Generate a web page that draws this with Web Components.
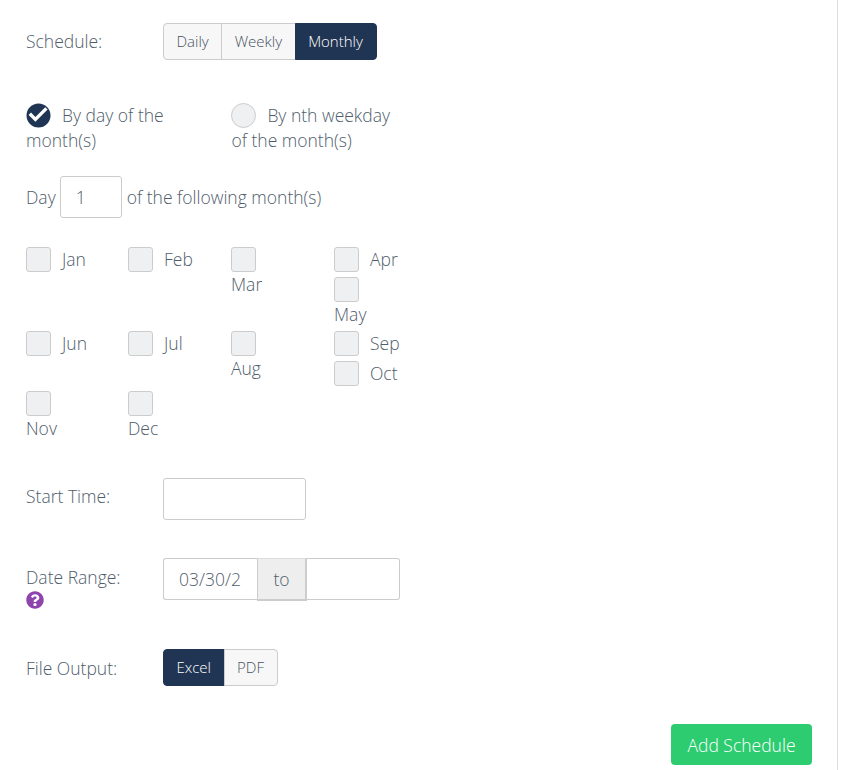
<!DOCTYPE html>
<html lang="en">
<head>
<meta charset="UTF-8">
<title>Schedule</title>
<style>
  html, body { margin: 0; height: 100%; background: #fff; overflow: hidden; }
  body { font: 300 17.5px/25px "Open Sans", "Liberation Sans", sans-serif; color: #4f5d6b; }
</style>
</head>
<body>
<schedule-panel>
  <form-row label="Schedule:" style="height:37px">
    <btn-group items="Daily,Weekly,Monthly" active="Monthly"></btn-group>
  </form-row>

  <radio-pair style="margin-top:43px">
    <radio-opt checked>By day of the month(s)</radio-opt>
    <radio-opt>By nth weekday of the month(s)</radio-opt>
  </radio-pair>

  <day-line style="margin-top:23px"></day-line>

  <month-grid style="margin-top:29px">
    <div><month-check>Jan</month-check></div>
    <div><month-check>Feb</month-check></div>
    <div><month-check stacked>Mar</month-check></div>
    <div><month-check>Apr</month-check><month-check stacked>May</month-check></div>
    <div><month-check>Jun</month-check></div>
    <div><month-check>Jul</month-check></div>
    <div><month-check stacked>Aug</month-check></div>
    <div><month-check>Sep</month-check><month-check>Oct</month-check></div>
    <div><month-check stacked>Nov</month-check></div>
    <div><month-check stacked>Dec</month-check></div>
  </month-grid>

  <form-row label="Start Time:" style="margin-top:33px;height:42px">
    <text-box style="width:143px"></text-box>
  </form-row>

  <form-row label="Date Range:" help style="margin-top:38px;height:52px">
    <date-range value="03/30/2"></date-range>
  </form-row>

  <form-row label="File Output:" help-free style="margin-top:39px;height:37px">
    <btn-group items="Excel,PDF" active="Excel"></btn-group>
  </form-row>

  <action-bar style="margin-top:38px"><add-button>Add Schedule</add-button></action-bar>
</schedule-panel>

<script>
  const NAVY = '#1f3553';

  customElements.define('schedule-panel', class extends HTMLElement {
    constructor() { super();
      this.attachShadow({ mode: 'open' }).innerHTML = `
        <style>
          :host { display: block; box-sizing: border-box; width: 838px; height: 770px;
                  padding: 23px 25px 0 26px; border-right: 1px solid #ddd; }
        </style>
        <slot></slot>`;
    }
  });

  customElements.define('form-row', class extends HTMLElement {
    constructor() { super();
      const help = this.hasAttribute('help') ? `
        <svg class="help" viewBox="0 0 512 512" width="18" height="18"><path fill="#8e44ad" d="M504 256c0 136.997-111.043 248-248 248S8 392.997 8 256C8 119.083 119.043 8 256 8s248 111.083 248 248zM262.655 90c-54.497 0-89.255 22.957-116.549 63.758-3.536 5.286-2.353 12.415 2.715 16.258l34.699 26.31c5.205 3.947 12.621 3.008 16.665-2.122 17.864-22.658 30.113-35.797 57.303-35.797 20.429 0 45.698 13.148 45.698 32.958 0 14.976-12.363 22.667-32.534 33.976C247.128 238.528 216 254.941 216 296v4c0 6.627 5.373 12 12 12h56c6.627 0 12-5.373 12-12v-1.333c0-28.462 83.186-29.647 83.186-106.667 0-58.002-60.165-102-116.531-102zM256 338c-25.365 0-46 20.635-46 46 0 25.364 20.635 46 46 46s46-20.636 46-46c0-25.365-20.635-46-46-46z"/></svg>` : '';
      this.attachShadow({ mode: 'open' }).innerHTML = `
        <style>
          :host { display: flex; }
          .label { width: 137px; flex: none; padding-top: 6px; }
          .help { display: block; margin-top: 1px; }
          :host([help]) .label, :host([help-free]) .label { padding-top: 7px; }
        </style>
        <div class="label">${this.getAttribute('label')}${help}</div>
        <slot></slot>`;
    }
  });

  customElements.define('btn-group', class extends HTMLElement {
    constructor() { super();
      const active = this.getAttribute('active');
      const btns = this.getAttribute('items').split(',').map(t =>
        `<span class="btn${t === active ? ' on' : ''}">${t}</span>`).join('');
      this.attachShadow({ mode: 'open' }).innerHTML = `
        <style>
          :host { display: flex; height: 37px; font-size: 15px; }
          .btn { box-sizing: border-box; display: flex; align-items: center; padding: 0 12.5px;
                 background: #f7f7f7; border: 1px solid #ccc; margin-left: -1px; color: #46525f; }
          .btn:first-of-type { margin-left: 0; border-radius: 4px 0 0 4px; }
          .btn:last-of-type { border-radius: 0 4px 4px 0; padding-right: 13.5px; }
          .on { background: ${NAVY}; border-color: ${NAVY}; color: #fff; }
        </style>
        ${btns}`;
    }
  });

  customElements.define('radio-pair', class extends HTMLElement {
    constructor() { super();
      this.attachShadow({ mode: 'open' }).innerHTML = `
        <style>
          :host { display: grid; grid-template-columns: 170px 170px; column-gap: 35.4px; }
        </style>
        <slot></slot>`;
    }
  });

  customElements.define('radio-opt', class extends HTMLElement {
    constructor() { super();
      const mark = this.hasAttribute('checked')
        ? `<svg class="mark" viewBox="0 0 25 25"><circle cx="12.5" cy="12.5" r="12" fill="${NAVY}"/><path fill="none" stroke="#fff" stroke-width="3.4" d="M3.8 10.8l5.6 5.6 11-11"/></svg>`
        : `<span class="mark empty"></span>`;
      this.attachShadow({ mode: 'open' }).innerHTML = `
        <style>
          :host { display: block; line-height: 25px; }
          .mark { display: inline-block; vertical-align: top; width: 25px; height: 25px; margin-right: 11px; }
          .empty { box-sizing: border-box; border: 1px solid #ccc; border-radius: 50%; background: #eff0f2; }
        </style>
        ${mark}<slot></slot>`;
    }
  });

  customElements.define('text-box', class extends HTMLElement {
    constructor() { super();
      this.attachShadow({ mode: 'open' }).innerHTML = `
        <style>
          :host { display: block; box-sizing: border-box; height: 42px; border: 1px solid #ccc;
                  border-radius: 3px; background: #fff; line-height: 40px; padding-left: 15px;
                  overflow: hidden; white-space: nowrap; }
        </style>
        <slot></slot>`;
    }
  });

  customElements.define('day-line', class extends HTMLElement {
    constructor() { super();
      this.attachShadow({ mode: 'open' }).innerHTML = `
        <style>
          :host { display: flex; align-items: center; height: 42px; }
          text-box { width: 62px; margin: 0 5px 0 4px; }
        </style>
        <span>Day</span><text-box>1</text-box><span>of the following month(s)</span>`;
    }
  });

  customElements.define('month-grid', class extends HTMLElement {
    constructor() { super();
      this.attachShadow({ mode: 'open' }).innerHTML = `
        <style>
          :host { display: grid; width: 410px; grid-template-columns: 102px 103px 103px 102px; }
        </style>
        <slot></slot>`;
    }
  });

  customElements.define('month-check', class extends HTMLElement {
    constructor() { super();
      this.attachShadow({ mode: 'open' }).innerHTML = `
        <style>
          :host { display: flex; min-height: 30px; align-items: flex-start; }
          :host([stacked]) { display: block; padding-bottom: 4px; line-height: 25px; }
          .box { display: block; box-sizing: border-box; width: 25px; height: 25px; flex: none;
                 border: 1px solid #ccc; border-radius: 3px; background: #eff0f2; margin-right: 11px; }
          :host([stacked]) .box { margin-right: 0; }
          .txt { display: block; }
        </style>
        <span class="box"></span><span class="txt"><slot></slot></span>`;
    }
  });

  customElements.define('date-range', class extends HTMLElement {
    constructor() { super();
      this.attachShadow({ mode: 'open' }).innerHTML = `
        <style>
          :host { display: flex; height: 42px; }
          .from { width: 94px; border-radius: 3px 0 0 3px; border-right: 0; }
          .to { box-sizing: border-box; width: 50px; height: 43px; background: #eee; border: 1px solid #ccc;
                border-top-color: #ddd; border-right-width: 2px; border-bottom-width: 2px;
                text-align: center; line-height: 41px; }
          .end { width: 93px; border-radius: 0 3px 3px 0; border-left: 0; }
        </style>
        <text-box class="from">${this.getAttribute('value')}</text-box><span class="to">to</span><text-box class="end"></text-box>`;
    }
  });

  customElements.define('action-bar', class extends HTMLElement {
    constructor() { super();
      this.attachShadow({ mode: 'open' }).innerHTML = `
        <style>:host { display: flex; justify-content: flex-end; }</style>
        <slot></slot>`;
    }
  });

  customElements.define('add-button', class extends HTMLElement {
    constructor() { super();
      this.attachShadow({ mode: 'open' }).innerHTML = `
        <style>
          :host { display: flex; align-items: center; justify-content: center; box-sizing: border-box;
                  width: 141px; height: 41px; padding-top: 1px; background: #2ecc71; border-radius: 4px; color: #fff; }
        </style>
        <slot></slot>`;
    }
  });
</script>
</body>
</html>
